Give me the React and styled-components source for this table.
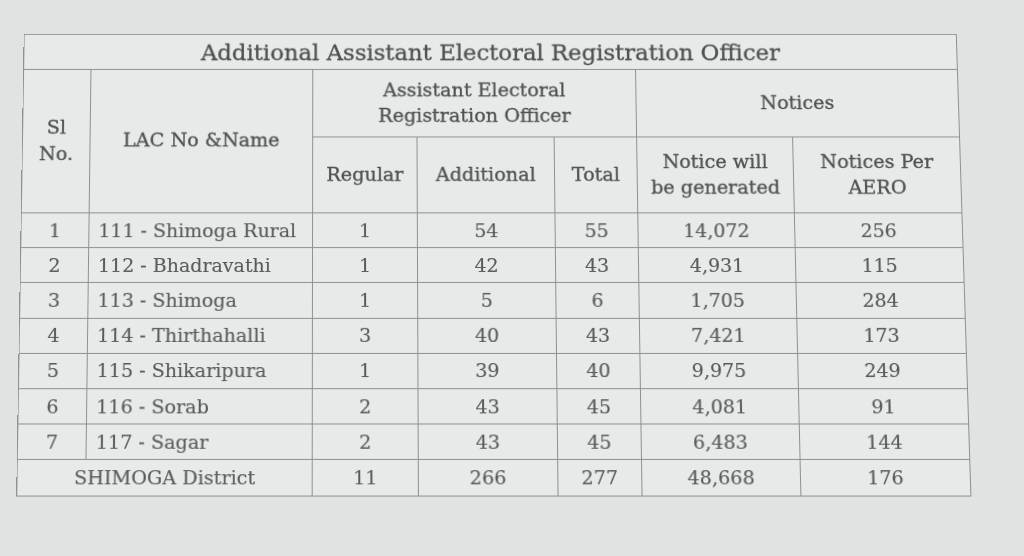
import React from "react";
import styled, { createGlobalStyle } from "styled-components";

const Global = createGlobalStyle`
  html, body { margin: 0; padding: 0; background: #dfe3e1; }
  body { width: 1024px; height: 556px; overflow: hidden; font-family: "DejaVu Serif", "Liberation Serif", serif; }
`;

const Page = styled.div`
  padding: 30px 0 0 20px;
`;

const Table = styled.table`
  border-collapse: collapse;
  width: 943px;
  table-layout: fixed;
  background: #e7eae8;
  color: #575b59;
  border: 1.5px solid #8d918f;
  transform: perspective(2000px) rotateX(5.8deg) skewX(0.44deg);
  transform-origin: 50% 50%;
`;

const Cell = styled.td`
  border: 1.5px solid #8d918f;
  text-align: ${(p) => p.$align || "center"};
  padding: ${(p) => (p.$align === "left" ? "0 0 0 9px" : "0")};
  font-size: 19px;
  height: ${(p) => p.$h || 34}px;
  line-height: 1.2;
  vertical-align: middle;
  -webkit-text-stroke: 0.15px #575b59;
`;

const Head = styled(Cell).attrs({ as: "th" })`
  font-weight: normal;
  color: #4d5150;
  font-size: ${(p) => p.$fs || 19.3}px;
  line-height: 1.35;
  -webkit-text-stroke: 0.3px #4d5150;
`;

const Title = styled(Head)`
  font-size: 23px;
  height: 32px;
  padding-top: 3px;
`;

const rows = [
  ["1", "111 - Shimoga Rural", "1", "54", "55", "14,072", "256"],
  ["2", "112 - Bhadravathi", "1", "42", "43", "4,931", "115"],
  ["3", "113 - Shimoga", "1", "5", "6", "1,705", "284"],
  ["4", "114 - Thirthahalli", "3", "40", "43", "7,421", "173"],
  ["5", "115 - Shikaripura", "1", "39", "40", "9,975", "249"],
  ["6", "116 - Sorab", "2", "43", "45", "4,081", "91"],
  ["7", "117 - Sagar", "2", "43", "45", "6,483", "144"],
];

const widths = [68, 224, 105, 138, 83, 157, 168];

export default function App() {
  return (
    <>
      <Global />
      <Page>
        <Table>
          <colgroup>
            {widths.map((w, i) => (
              <col key={i} style={{ width: w }} />
            ))}
          </colgroup>
          <thead>
            <tr>
              <Title colSpan={7}>Additional Assistant Electoral Registration Officer</Title>
            </tr>
            <tr>
              <Head rowSpan={2}>Sl<br />No.</Head>
              <Head rowSpan={2}>LAC No &amp;Name</Head>
              <Head colSpan={3} $h={68}>Assistant Electoral<br />Registration Officer</Head>
              <Head colSpan={2} $h={68}>Notices</Head>
            </tr>
            <tr>
              <Head $h={76}>Regular</Head>
              <Head>Additional</Head>
              <Head>Total</Head>
              <Head>Notice will<br />be generated</Head>
              <Head>Notices Per<br />AERO</Head>
            </tr>
          </thead>
          <tbody>
            {rows.map((r) => (
              <tr key={r[0]}>
                {r.map((v, i) => (
                  <Cell key={i} $align={i === 1 ? "left" : "center"} $h={34.2}>
                    {v}
                  </Cell>
                ))}
              </tr>
            ))}
            <tr>
              <Cell colSpan={2} $h={35}>SHIMOGA District</Cell>
              <Cell>11</Cell>
              <Cell>266</Cell>
              <Cell>277</Cell>
              <Cell>48,668</Cell>
              <Cell>176</Cell>
            </tr>
          </tbody>
        </Table>
      </Page>
    </>
  );
}
